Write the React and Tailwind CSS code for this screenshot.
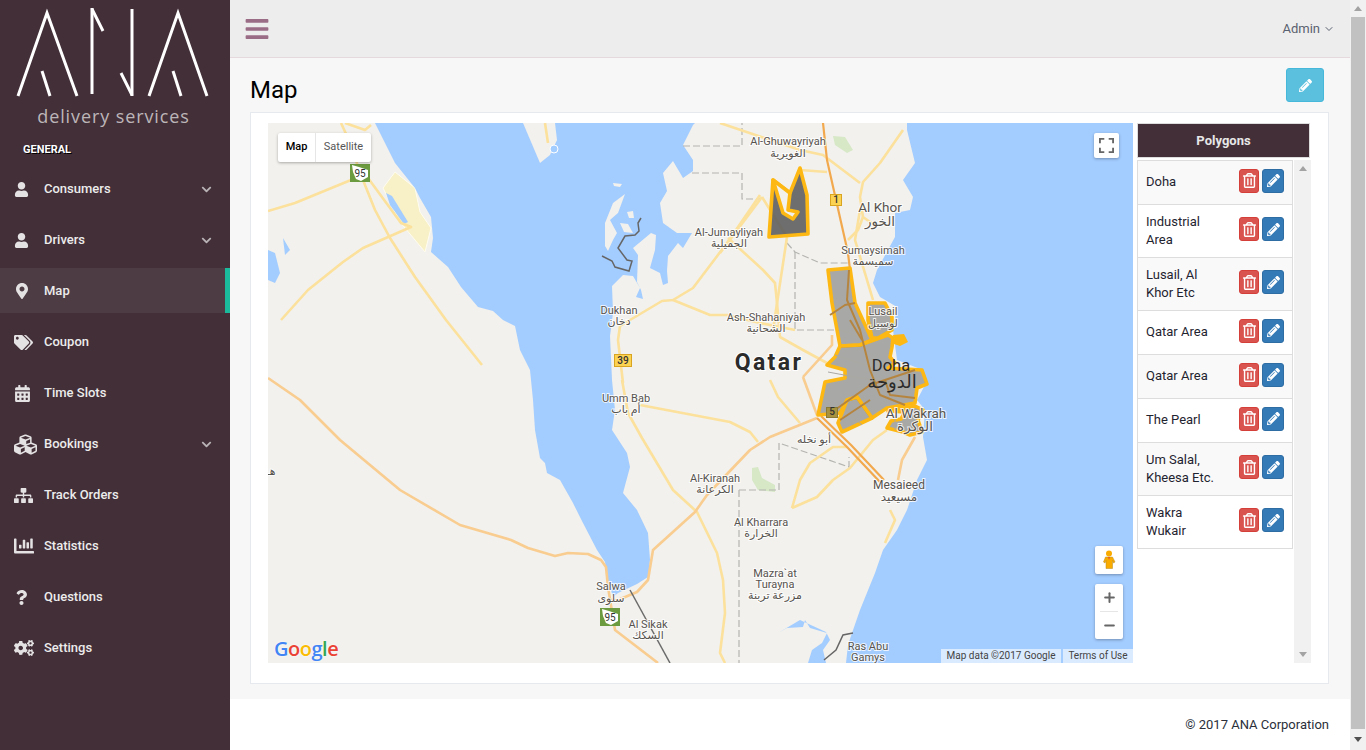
import {
  FaUser,
  FaMapMarkerAlt,
  FaTags,
  FaCalendarAlt,
  FaCubes,
  FaSitemap,
  FaChartBar,
  FaQuestion,
  FaCogs,
  FaChevronDown,
  FaBars,
  FaPencilAlt,
  FaRegTrashAlt,
} from "react-icons/fa";
import { ChevronDown, Plus, Minus } from "lucide-react";

const menu = [
  { label: "Consumers", icon: FaUser, size: 15, arrow: true },
  { label: "Drivers", icon: FaUser, size: 15, arrow: true },
  { label: "Map", icon: FaMapMarkerAlt, size: 16, active: true },
  { label: "Coupon", icon: FaTags, size: 19 },
  { label: "Time Slots", icon: FaCalendarAlt, size: 17 },
  { label: "Bookings", icon: FaCubes, size: 23, arrow: true },
  { label: "Track Orders", icon: FaSitemap, size: 19 },
  { label: "Statistics", icon: FaChartBar, size: 20 },
  { label: "Questions", icon: FaQuestion, size: 15 },
  { label: "Settings", icon: FaCogs, size: 20 },
];

const polygons = [
  { name: ["Doha"], h: "h-[44px]" },
  { name: ["Industrial", "Area"], h: "h-[53px]" },
  { name: ["Lusail, Al", "Khor Etc"], h: "h-[53px]" },
  { name: ["Qatar Area"], h: "h-[44px]" },
  { name: ["Qatar Area"], h: "h-[44px]" },
  { name: ["The Pearl"], h: "h-[44px]" },
  { name: ["Um Salal,", "Kheesa Etc."], h: "h-[53px]" },
  { name: ["Wakra", "Wukair"], h: "h-[53px]" },
];

// coordinates below are page pixels, the svg viewBox starts at the map corner
const water = [
  "375,123 385,143 395,163 415,188 420,198 431,217 433,238 431,252 448,267 461,287 478,307 493,311 503,320 515,326 520,350 530,370 533,400 535,430 540,458 545,463 547,473 560,480 573,503 583,523 597,550 605,562 608,580 613,597 618,593 637,584 648,577 650,560 648,533 637,510 623,493 630,467 627,453 612,430 615,410 612,380 610,336 613,313 612,286 623,275 633,276 640,288 636,297 643,299 641,290 637,282 638,255 633,248 651,233 656,235 655,250 650,268 660,273 663,285 668,283 667,271 668,256 678,243 683,248 692,233 677,233 663,223 660,203 667,191 663,173 673,161 683,178 693,171 693,160 683,145 693,125 695,123",
  "907,123 907,130 915,163 903,180 913,197 910,210 895,213 895,237 877,270 873,283 880,297 897,307 893,330 897,360 923,370 925,385 917,400 925,410 923,437 927,460 917,480 907,510 897,530 883,550 875,573 860,610 852,633 848,645 846,663 1133,663 1133,123",
  "778,633 787,628 803,627 805,620 810,628 827,633 822,643 812,650 808,663 826,663 823,650 830,640 826,632 800,620",
  "268,250 275,253 280,273 275,283 268,280",
  "283,238 290,250 285,255",
  "386,193 392,196 408,222 404,224 390,205",
];

const land = [
  "523,123 540,163 550,155 557,140 555,123",
  "605,223 613,203 625,194 618,213 610,220 617,233 613,240 608,251 605,246",
  "620,223 628,224 633,233 624,232",
  "627,212 633,211 634,218 629,218",
  "613,183 622,184 620,187 614,186",
];

const yellowRoads = [
  "341,123 347,136 363,180 375,210 390,238 415,277 446,320 482,365",
  "268,211 295,203 351,180",
  "281,320 308,290 343,262 363,248 411,227 401,223 368,178",
  "345,123 365,130 371,125",
  "545,123 548,143",
  "622,380 628,413 642,438 673,490 697,512 717,553 723,580 725,613 720,653 725,663",
  "640,405 730,422 750,432 758,442",
  "770,380 778,397 800,423",
  "792,508 800,480 810,463 833,447 847,447",
  "792,508 817,497 833,480 850,468 873,440 887,430",
  "890,510 895,520 885,543",
  "903,130 880,163 863,182 860,197 863,217 877,227",
  "863,217 858,230 848,240",
  "800,150 823,155 860,183",
  "800,170 827,172",
  "762,197 720,253",
  "760,195 727,243 693,288 673,300 662,301 630,320 620,326 618,340 623,383",
  "673,300 710,315 727,315 760,323 795,330",
  "728,238 763,270 775,283 777,303 780,337 803,350 827,363",
  "762,197 787,237 773,330",
  "860,210 855,240 873,300",
  "720,123 800,150",
];

const orangeRoads = [
  "268,378 300,400 340,440 400,490 460,525 511,540 528,548 555,556 568,553 588,554 601,560 606,567 608,587 615,630 658,663",
  "608,600 618,600 637,592 648,580 653,550 695,512 707,495 750,450 770,437 817,418",
  "803,377 832,345 832,335",
  "803,377 817,415",
  "898,480 902,460 915,437",
];

const mainRoads = [
  "823,123 827,160 848,253 850,270",
  "817,418 847,447 880,482",
  "821,416 851,445 884,480",
];

const zoneRoads = [
  "849,270 847,300 860,330 870,370 880,395 905,405",
  "830,315 845,305 855,303",
  "828,415 870,385 915,370",
  "885,380 890,395 915,398",
  "862,340 850,320",
  "840,420 870,400",
];

const zoneStreets = [
  "835,355 860,363 872,368",
  "828,372 860,378 880,380 912,372",
  "880,395 912,388",
  "895,415 895,430",
  "845,410 862,425",
  "840,330 862,338",
];

const borders = [
  "683,146 742,146 742,123",
  "692,173 742,173 742,199 760,199",
  "787,243 795,252 820,263 850,263",
  "795,252 795,330 835,330",
  "739,490 739,663",
  "739,490 777,490",
  "779,490 779,443 849,467 849,457",
];

const labels = [
  ["Al-Ghuwayriyah", 788, 145, 11],
  ["الغويرية", 788, 157, 11],
  ["Al Khor", 880, 212, 13.5],
  ["الخور", 880, 226, 13.5],
  ["Al-Jumayliyah", 729, 236, 11],
  ["الجميلية", 729, 247, 11],
  ["Sumaysimah", 873, 254, 11],
  ["سميسمة", 873, 265, 11],
  ["Ash-Shahaniyah", 766, 321, 11],
  ["الشحانية", 766, 332, 11],
  ["Dukhan", 619, 314, 11],
  ["دخان", 619, 325, 11],
  ["Umm Bab", 626, 402, 11],
  ["أم باب", 626, 413, 11],
  ["أبو نخله", 814, 443, 11],
  ["Al-Kiranah", 715, 482, 11],
  ["الكرعانة", 715, 493, 11],
  ["Al Kharrara", 761, 526, 11],
  ["الخرارة", 761, 537, 11],
  ["Mesaieed", 899, 489, 12],
  ["مسيعيد", 899, 501, 12],
  ["Mazra`at", 775, 577, 11],
  ["Turayna", 775, 588, 11],
  ["مزرعة تربنة", 775, 599, 11],
  ["Salwa", 611, 590, 11],
  ["سلوى", 611, 602, 11],
  ["Al Sikak", 648, 628, 11],
  ["السكك", 648, 639, 11],
  ["Ras Abu", 868, 650, 11],
  ["Gamys", 868, 661, 11],
  ["هـ", 271, 475, 11],
];

const areaLabels = [
  ["Lusail", 883, 315, 11],
  ["لوسيل", 883, 327, 11],
  ["Al Wakrah", 916, 418, 13.5],
  ["الوكرة", 915, 431, 13.5],
];

function Lines({ items, color, width, dash }) {
  return items.map((points, i) => (
    <polyline
      key={i}
      points={points}
      fill="none"
      stroke={color}
      strokeWidth={width}
      strokeDasharray={dash}
      strokeLinejoin="round"
    />
  ));
}

function Labels({ items, color = "#57534e" }) {
  return items.map(([text, x, y, size], i) => (
    <text
      key={i}
      x={x}
      y={y}
      fontSize={size}
      textAnchor="middle"
      fill={color}
      stroke="#ffffff"
      strokeWidth="2"
      strokeOpacity="0.8"
      paintOrder="stroke"
      fontFamily="Roboto, 'DejaVu Sans', sans-serif"
    >
      {text}
    </text>
  ));
}

function Shield({ x, y }) {
  return (
    <g>
      <rect x={x} y={y} width="20" height="18" fill="#6c9a3f" />
      <polygon
        points={`${x + 2},${y + 1} ${x + 9},${y + 3} ${x + 18},${y + 6} ${x + 18},${y + 13} ${x + 11},${y + 17} ${x + 6},${y + 15} ${x + 3},${y + 8}`}
        fill="#ffffff"
      />
      <text x={x + 10} y={y + 13} fontSize="10" textAnchor="middle" fill="#333" fontFamily="Roboto, sans-serif">
        95
      </text>
    </g>
  );
}

function RoadSign({ x, y, w, h, text, bg = "#fcd253", border = "#d9a520" }) {
  return (
    <g>
      <rect x={x + 0.5} y={y + 0.5} width={w} height={h} fill={bg} stroke={border} />
      <text x={x + w / 2 + 0.5} y={y + h - 2.5} fontSize="10" fontWeight="500" textAnchor="middle" fill="#333" fontFamily="Roboto, sans-serif">
        {text}
      </text>
    </g>
  );
}

function MapDrawing() {
  const areaFill = "#6b6b6b";
  const areaStroke = "#fdb813";
  return (
    <svg viewBox="268 123 865 540" className="absolute inset-0 w-full h-full">
      <rect x="268" y="123" width="865" height="540" fill="#f2f1ed" />
      <polygon points="383,188 395,172 415,188 420,212 431,228 425,252 400,222" fill="#f8f0c6" stroke="#fffdf0" />
      {water.map((points, i) => (
        <polygon key={i} points={points} fill="#a3ccff" />
      ))}
      {land.map((points, i) => (
        <polygon key={i} points={points} fill="#f2f1ed" />
      ))}
      <circle cx="554" cy="149" r="4" fill="#a3ccff" stroke="#ffffff" strokeWidth="1" />
      <polygon points="752,468 758,467 762,478 775,485 775,492 758,490 752,480" fill="#d6e8c6" />
      <polygon points="833,136 845,137 853,150 847,153 835,145" fill="#d6e8c6" />

      <Lines items={borders} color="#b4b4b0" width="1.2" dash="7 3" />
      <Lines items={yellowRoads} color="#fce19c" width="2.6" />
      <Lines items={orangeRoads} color="#f9cc8f" width="2.6" />
      <Lines items={mainRoads} color="#f2a94e" width="2.2" />
      <polyline points="630,590 670,663" fill="none" stroke="#6b6b6b" strokeWidth="1.5" />
      <polyline
        points="641,218 638,223 639,231 635,235 625,236 618,248 627,260 632,261 629,271 615,267 612,261 602,256"
        fill="none"
        stroke="#666"
        strokeWidth="1.5"
      />
      <polyline points="853,633 843,635 836,650 824,660" fill="none" stroke="#666" strokeWidth="1.5" />

      <Shield x={350} y={164} />
      <Shield x={600} y={608} />
      <RoadSign x={830} y={194} w={11} h={11} text="1" />
      <RoadSign x={614} y={354} w={17} h={12} text="39" />

      <Labels items={labels} />
      <text
        x="769"
        y="370"
        fontSize="23"
        fontWeight="700"
        letterSpacing="2.4"
        textAnchor="middle"
        fill="#2b2b2b"
        stroke="#ffffff"
        strokeWidth="2"
        paintOrder="stroke"
        fontFamily="Roboto, sans-serif"
      >
        Qatar
      </text>

      {/* delivery zones */}
      <g fill={areaFill} fillOpacity="0.55" stroke={areaStroke} strokeWidth="3.6" strokeLinejoin="round">
        <polygon points="828,270 850,268 855,303 872,340 860,345 840,346 832,303" />
        <polygon points="868,303 885,303 892,317 892,330 878,338 872,338 868,320" />
        <polygon points="840,346 860,345 888,335 893,338 892,347 890,357 895,363 888,368 922,370 927,384 917,388 915,403 887,408 872,418 857,397 847,400 840,413 818,415 825,382 845,378 845,370 827,365 835,357" />
        <polygon points="857,397 872,418 842,432 838,423 847,400" />
        <polygon points="888,411 915,406 923,410 918,420 922,432 910,435 903,432 887,428 891,421 901,419 905,412" />
      </g>
      <Lines items={zoneStreets} color="#aaa8a3" width="1" />
      <Lines items={zoneRoads} color="#b5853f" width="2" />
      <polygon points="893,335 904,334 908,342 900,346 894,344" fill={areaStroke} />
      <polygon
        points="773,180 790,193 800,168 807,195 808,234 769,237"
        fill="#5f5f5f"
        fillOpacity="0.9"
        stroke={areaStroke}
        strokeWidth="3.6"
        strokeLinejoin="round"
      />
      <polygon
        points="773,180 790,193 788,210 798,212 793,219 783,213"
        fill="#f2f1ed"
        stroke={areaStroke}
        strokeWidth="3.6"
        strokeLinejoin="round"
      />
      <RoadSign x={826} y={407} w={11} h={10} text="5" bg="#a8923f" border="#8a7a34" />
      <Labels items={areaLabels} />
      <text x="891" y="371" fontSize="16.500" textAnchor="middle" fill="#2b2b2b" fontFamily="Roboto, sans-serif">
        Doha
      </text>
      <text x="892" y="388" fontSize="18" textAnchor="middle" fill="#2b2b2b" fontFamily="'DejaVu Sans', sans-serif">
        الدوحة
      </text>
    </svg>
  );
}

function Logo() {
  return (
    <svg viewBox="0 0 230 100" className="w-[230px] h-[100px]" fill="none" stroke="#ffffff" strokeWidth="3">
      <polyline points="18,96 47,13 77,96" />
      <line x1="42" y1="71" x2="50" y2="96" />
      <line x1="92" y1="8" x2="92" y2="94" />
      <line x1="92" y1="9" x2="103" y2="31" />
      <line x1="132" y1="9" x2="132" y2="96" />
      <line x1="121" y1="73" x2="132" y2="95" />
      <polyline points="149,96 178,13 207,96" />
      <line x1="173" y1="71" x2="181" y2="96" />
    </svg>
  );
}

function Sidebar() {
  return (
    <aside className="w-[230px] shrink-0 bg-[#432f38] flex flex-col">
      <Logo />
      <div className="pr-[3px] text-center text-[18px] leading-[24px] tracking-[0.9px] text-[#bdb6b9] font-['Open_Sans'] mt-[4px]">
        delivery services
      </div>
      <div className="pl-[23px] mt-[15px] text-[11px] leading-[14px] font-bold text-white [text-shadow:1px_1px_#000]">
        GENERAL
      </div>
      <nav className="mt-[9px] flex flex-col gap-[6px]">
        {menu.map((item) => {
          const Icon = item.icon;
          return (
            <div
              key={item.label}
              className={`h-[45px] pt-[1px] flex items-center text-[13px] font-medium text-[#ececec] ${
                item.active ? "bg-[#4e3c45] border-r-[5px] border-[#1abb9c]" : ""
              }`}
            >
              <span className="w-[44px] shrink-0 pl-[14px] flex items-center text-[#e4e2e3]">
                <Icon size={item.size} />
              </span>
              <span className="flex-1">{item.label}</span>
              {item.arrow && <FaChevronDown size={11} className="mr-[18px] text-[#b9b3b6]" />}
            </div>
          );
        })}
      </nav>
    </aside>
  );
}

function MapPanel() {
  return (
    <div className="relative w-[865px] h-[540px] shrink-0 overflow-hidden">
      <MapDrawing />

      <div className="absolute left-[10px] top-[10px] flex h-[29px] bg-white rounded-[2px] shadow-[0_1px_3px_rgba(0,0,0,0.3)] text-[11px]">
        <div className="w-[38px] flex items-center justify-center font-medium text-black border-r border-[#e6e6e6]">Map</div>
        <div className="w-[55px] flex items-center justify-center text-[#565656]">Satellite</div>
      </div>

      <div className="absolute right-[14px] top-[10px] w-[25px] h-[25px] bg-white rounded-[2px] shadow-[0_1px_3px_rgba(0,0,0,0.3)] flex items-center justify-center">
        <svg width="15" height="15" viewBox="0 0 17 17" fill="none" stroke="#666" strokeWidth="2.2">
          <path d="M1 6V1h5M11 1h5v5M16 11v5h-5M6 16H1v-5" />
        </svg>
      </div>

      <div className="absolute right-[10px] bottom-[89px] w-[28px] h-[28px] bg-white rounded-[2px] shadow-[0_1px_3px_rgba(0,0,0,0.3)] flex items-center justify-center">
        <svg width="14" height="20" viewBox="0 0 14 20">
          <circle cx="7" cy="3.5" r="3" fill="#f9ab00" />
          <path d="M3.5 7h7l2.5 5-1.5 1-1-2.500v8H4v-8l-1 2.500-1.500-1z" fill="#f9ab00" stroke="#b98a20" strokeWidth="0.5" />
          <path d="M6 7h2l-1 3z" fill="#e2582b" />
        </svg>
      </div>

      <div className="absolute right-[10px] bottom-[24px] w-[28px] h-[55px] bg-white rounded-[2px] shadow-[0_1px_3px_rgba(0,0,0,0.3)] flex flex-col items-center">
        <div className="h-[27px] w-full flex items-center justify-center text-[#666]">
          <Plus size={15} strokeWidth={3.2} />
        </div>
        <div className="w-[18px] h-px bg-[#e6e6e6]" />
        <div className="h-[27px] w-full flex items-center justify-center text-[#666]">
          <Minus size={15} strokeWidth={3.2} />
        </div>
      </div>

      <div className="absolute left-[6px] bottom-[1px] text-[20px] leading-[26px] font-semibold font-['Open_Sans'] tracking-[-0.5px] [text-shadow:0_0_2px_#fff]">
        <span className="text-[#4285f4]">G</span>
        <span className="text-[#ea4335]">o</span>
        <span className="text-[#fbbc05]">o</span>
        <span className="text-[#4285f4]">g</span>
        <span className="text-[#34a853]">l</span>
        <span className="text-[#ea4335]">e</span>
      </div>

      <div className="absolute right-0 bottom-0 flex gap-[2px] h-[14px] text-[10px] leading-[14px] text-[#444]">
        <div className="w-[120px] bg-white/60 text-center">Map data ©2017 Google</div>
        <div className="w-[70px] bg-white/60 text-center">Terms of Use</div>
      </div>
    </div>
  );
}

function PolygonList() {
  return (
    <div className="ml-[4px] w-[174px] shrink-0 flex flex-col">
      <div className="w-[173px] h-[35px] bg-[#432f38] border border-[#dddddd] flex items-center justify-center text-[13px] font-bold text-[#e7e7e7]">
        Polygons
      </div>
      <div className="mt-[2px] flex-1 flex">
        <div className="w-[156px] self-start border border-[#dddddd] border-b-0">
          {polygons.map((row, i) => (
            <div
              key={i}
              className={`${row.h} flex items-center justify-between pl-[8px] pr-[8px] border-b-[1px] border-[#dddddd] text-[13px] leading-[18px] text-[#1f2430] ${
                i % 2 === 0 ? "bg-[#f9f9f9]" : "bg-white"
              }`}
            >
              <div className={row.name.length === 1 ? "mb-[2px]" : ""}>
                {row.name.map((line) => (
                  <div key={line}>{line}</div>
                ))}
              </div>
              <div className="flex gap-[3px] mb-[4px]">
                <div className="w-[20px] h-[24px] rounded-[3px] bg-[#d9534f] border border-[#d43f3a] flex items-center justify-center text-white">
                  <FaRegTrashAlt size={15} />
                </div>
                <div className="w-[22px] h-[24px] rounded-[3px] bg-[#337ab7] border border-[#2e6da4] flex items-center justify-center text-white">
                  <FaPencilAlt size={13} />
                </div>
              </div>
            </div>
          ))}
        </div>
        <div className="ml-[1px] w-[17px] bg-[#f1f1f1] flex flex-col items-center justify-between py-[6px]">
          <div className="w-0 h-0 border-x-[4px] border-x-transparent border-b-[5px] border-b-[#a3a3a3]" />
          <div className="w-0 h-0 border-x-[4px] border-x-transparent border-t-[5px] border-t-[#a3a3a3]" />
        </div>
      </div>
    </div>
  );
}

export default function App() {
  return (
    <div className="flex h-screen overflow-hidden bg-white font-['Roboto',sans-serif]">
      <Sidebar />

      <main className="flex-1 flex flex-col min-w-0">
        <header className="h-[58px] shrink-0 bg-[#ededed] border-b border-[#e6d9de] flex items-center justify-between pl-[14px] pr-[15px]">
          <FaBars size={26} className="text-[#9b6c85]" />
          <div className="flex items-center gap-[3px] text-[13px] text-[#5a6170]">
            Admin
            <ChevronDown size={12} />
          </div>
        </header>

        <section className="flex-1 bg-[#f7f7f7] pl-[20px] pr-[21px] pt-[10px] flex flex-col">
          <div className="h-[44px] flex items-start justify-between">
            <h1 className="text-[24px] leading-[44px] text-black">Map</h1>
            <div className="mr-[5px] w-[38px] h-[34px] rounded-[3px] bg-[#5bc0de] border border-[#46b8da] flex items-center justify-center text-white">
              <FaPencilAlt size={13} />
            </div>
          </div>
          <div className="h-[572px] bg-white border border-[#e6e9ed] pl-[17px] pt-[10px] flex items-start">
            <MapPanel />
            <div className="h-[540px] flex">
              <PolygonList />
            </div>
          </div>
        </section>

        <footer className="h-[51px] shrink-0 bg-white flex items-center justify-end pr-[21px] text-[13px] text-[#2a2f3a]">
          © 2017 ANA Corporation
        </footer>
      </main>

      <div className="w-[16px] shrink-0 bg-[#f1f1f1] flex flex-col items-center">
        <div className="h-[17px] flex items-center justify-center">
          <div className="w-0 h-0 border-x-[4px] border-x-transparent border-b-[5px] border-b-[#a3a3a3]" />
        </div>
        <div className="flex-1 w-[14px] bg-[#c1c1c1]" />
        <div className="h-[21px] flex items-center justify-center">
          <div className="w-0 h-0 border-x-[4px] border-x-transparent border-t-[5px] border-t-[#505050]" />
        </div>
      </div>
    </div>
  );
}
